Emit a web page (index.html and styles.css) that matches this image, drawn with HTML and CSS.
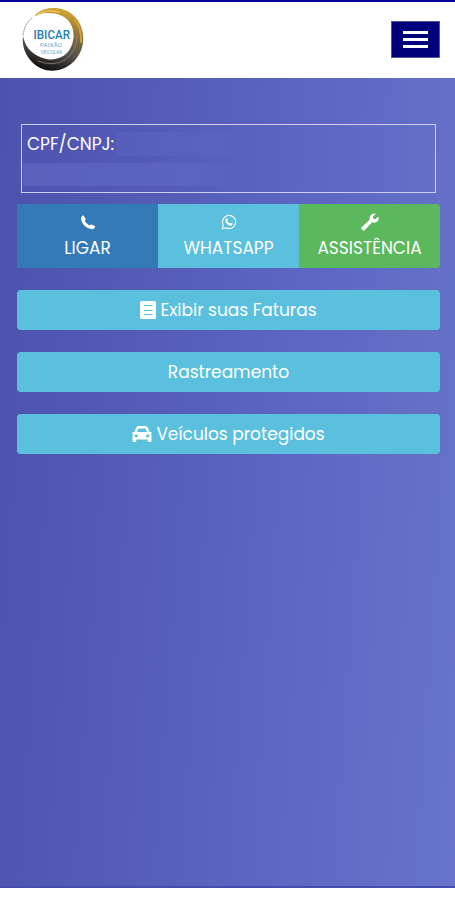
FILE: index.html
```html
<!DOCTYPE html>
<html lang="pt-br">

	<head>
		<meta charset="UTF-8">
		<meta name="viewport" content="width=device-width, initial-scale=1">
		<title>Ibicar</title>
		<link rel="stylesheet" href="styles.css">
	</head>

	<body>
		<header class="topo">
			<svg class="logo" viewBox="0 0 66 66">
				<defs>
					<linearGradient id="anel" x1="0.75" y1="0" x2="0.45" y2="1">
						<stop offset="0" stop-color="#dcae37" />
						<stop offset="0.22" stop-color="#ad862f" />
						<stop offset="0.48" stop-color="#746241" />
						<stop offset="0.68" stop-color="#55524e" />
						<stop offset="1" stop-color="#111" />
					</linearGradient>
				</defs>
				<path fill="url(#anel)" fill-rule="evenodd" d="M16 8 C26 0 43 0 53 9 C65 19 67 40 56 53 C45 67 24 69 12 56 C4 48 2 38 3 30 C5 40 10 46 18 50 C30 57 46 53 51 41 C57 28 52 14 42 10 C34 6 25 7 16 8Z" />
				<g fill="none" stroke-linecap="round">
					<path stroke="#e7be4d" stroke-width="2" d="M16 9 Q26 3 39 6" />
					<path stroke="#8d8574" stroke-width="0.8" d="M57 30 Q57 45 45 54 Q33 61 18 55" />
					<path stroke="#cca13a" stroke-width="2" d="M55 14 Q62 23 61 36" />
					<path stroke="#8b8b8b" stroke-width="0.8" stroke-dasharray="2 1" d="M3 29 Q5 17 12 12" />
				</g>
				<text class="marca" x="13.500" y="33" textLength="36.500" lengthAdjust="spacingAndGlyphs">IBICAR</text>
				<text class="slogan" x="20" y="41" textLength="22" lengthAdjust="spacingAndGlyphs">PAIXÃO</text>
				<text class="slogan" x="20.500" y="47.500" textLength="21.500" lengthAdjust="spacingAndGlyphs">VEICULAR</text>
			</svg>
			<button class="menu" type="button" aria-label="Menu">
				<span></span>
				<span></span>
				<span></span>
			</button>
		</header>

		<main>
			<div class="dados">
				<p>CPF/CNPJ: <span class="valor"></span></p>
				<div class="linha"></div>
			</div>

			<div class="acoes">
				<a class="acao ligar">
					<svg viewBox="0 0 16 16"><path fill="#fff" d="M3.700 1.700 L5.600 5 Q5.900 5.600 5.300 6.100 L4.600 6.800 Q6.200 9.900 9.400 11.500 L10.300 10.700 Q10.800 10.300 11.500 10.500 L14.800 12.100 Q15.400 12.400 15 13.200 Q14 15.400 12 15.200 Q3 14 1 5.300 Q.7 2.800 2.700 1.600 Q3.300 1.200 3.700 1.700Z" /></svg>
					<span>LIGAR</span>
				</a>
				<a class="acao whats">
					<svg viewBox="0 0 16 16"><path fill="none" stroke="#fff" stroke-width="1.100" d="M1.300 14.700 L2.300 11.200 A6.600 6.600 0 1 1 4.900 13.800Z" /><path fill="#fff" d="M5.300 4.200 L6.200 4.200 L7 6.100 L6.300 7.100 Q7.100 8.800 8.900 9.600 L9.800 8.700 L11.700 9.600 Q11.700 11.500 9.800 11.700 Q5.500 11.200 4.300 6.500 Q4.200 4.900 5.300 4.200Z" /></svg>
					<span>WHATSAPP</span>
				</a>
				<a class="acao assist">
					<svg class="chave" viewBox="0 0 18 18"><path fill="#fff" d="M17.600 4.100 Q18.200 8 15 9.300 Q13 10 11.100 9.300 L3.800 16.900 Q2.600 18 1.300 16.900 L.7 16.300 Q-.2 15 .9 13.900 L8.700 6.800 Q8 4 9.700 2.200 Q11.600 0 14.200 .6 L14.400 1.200 L11.900 3.700 L12.300 5.700 L14.300 6.200 L16.900 3.900Z" /></svg>
					<span>ASSISTÊNCIA</span>
				</a>
			</div>

			<a class="botao">
				<svg class="fatura" viewBox="0 0 16 18"><rect width="16" height="18" rx="1.500" fill="#fff" /><path fill="none" stroke="#5bc0de" stroke-width="1.200" d="M4 4.500h8.500M4 9.500h8.500M4 13.500h8.500" /></svg>
				<span>Exibir suas Faturas</span>
			</a>
			<a class="botao">
				<span>Rastreamento</span>
			</a>
			<a class="botao">
				<svg class="carro" viewBox="0 0 20 16"><path fill="#fff" fill-rule="evenodd" d="M2.500 6 L4 2 Q4.700 0 7 0 H13 Q15.300 0 16 2 L17.500 6 H19 Q20 6 19.800 7 L19.500 7.500 L18.500 7.700 Q19.500 8.400 19.500 9.500 V14.500 Q19.500 16 18 16 H17.200 Q15.700 16 15.700 14.500 V13.500 H4.300 V14.500 Q4.300 16 2.800 16 H2 Q.5 16 .5 14.500 V9.500 Q.5 8.400 1.500 7.700 L.5 7.500 L.2 7 Q0 6 1 6Z M6.200 3 L5 6 H15 L13.800 3 Q13.600 2.500 13 2.500 H7 Q6.400 2.500 6.200 3Z M4 8.300 A1.500 1.500 0 0 0 4 11.300 H6 Q6 8.300 4 8.300Z M16 8.300 Q14 8.300 14 11.300 H16 A1.500 1.500 0 0 0 16 8.300Z" /></svg>
				<span>Veículos protegidos</span>
			</a>
		</main>
	</body>

</html>
```

FILE: styles.css
```css
* {
	margin: 0;
	padding: 0;
	box-sizing: border-box;
}

body {
	background: white;
	color: white;
	font-family: Poppins, Inter, "Liberation Sans", sans-serif;
	font-size: 17px;
}

.topo {
	display: flex;
	justify-content: space-between;
	align-items: flex-start;
	height: 78px;
	padding: 4px 15px 0 20px;
	border-top: 2px solid #08009b;
	background: #fff;
}

.logo {
	width: 66px;
	height: 66px;
}

.marca {
	fill: #287eb2;
	font-family: Roboto, sans-serif;
	font-size: 12px;
	font-weight: 500;
}

.slogan {
	fill: #66a9cc;
	font-family: Roboto, sans-serif;
	font-size: 5px;
}

.menu {
	display: flex;
	flex-direction: column;
	justify-content: center;
	align-items: center;
	gap: 4px;
	width: 49px;
	height: 37px;
	margin-top: 15px;
	border: 1px solid #55558f;
	background: #00007b;
}

.menu span {
	width: 25px;
	height: 3px;
	background: #fff;
}

main {
	height: 810px;
	padding: 46px 15px 0 17px;
	border-bottom: 2px solid #444eb0;
	background: linear-gradient(94deg, #4c52ad 0%, #5861bb 48%, #5d66c2 62%, #6774ca 100%);
}

.dados {
	height: 69px;
	margin: 0 4px 11px;
	padding: 5px 0 0 1px;
	border: 1px solid #cccfec;
}

.dados p {
	display: flex;
	height: 33px;
	padding: 2px 0 0 4px;
	line-height: 24px;
}

.valor {
	width: 130px;
	height: 24px;
	margin-left: 2px;
	background: linear-gradient(to right, #555eb9, #5a63be 75%, transparent);
}

.linha {
	width: 230px;
	height: 23px;
	background: linear-gradient(to right, #5961bb, #5b64bf 75%, transparent);
}

.acoes {
	display: grid;
	grid-template-columns: 141px 141px 1fr;
	height: 64px;
	margin-bottom: 22px;
	border-radius: 0 4px 4px 0;
	overflow: hidden;
}

.acao {
	display: flex;
	flex-direction: column;
	align-items: center;
	padding-top: 10px;
}

.acao svg {
	width: 16px;
	height: 16px;
	margin-bottom: 6px;
}

.acao .chave {
	width: 18px;
	height: 18px;
	margin: -1px 0 5px;
}

.acao span {
	line-height: 24px;
}

.ligar {
	background: #337ab7;
}

.whats {
	background: #5bc0de;
}

.assist {
	background: #5cb85c;
}

.botao {
	display: flex;
	justify-content: center;
	align-items: center;
	height: 40px;
	margin-bottom: 22px;
	border-radius: 4px;
	background: #5bc0de;
	line-height: 24px;
}

.fatura {
	width: 16px;
	height: 18px;
	margin-right: 4px;
}

.carro {
	width: 20px;
	height: 16px;
	margin-right: 4px;
}
```
